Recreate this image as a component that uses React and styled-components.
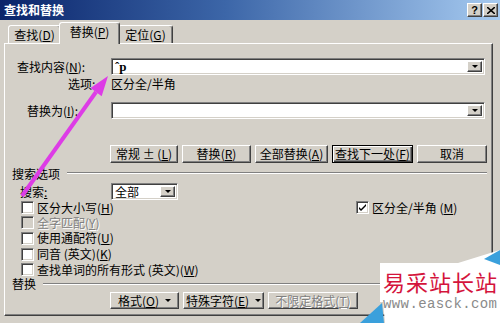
import React from "react";
import styled, { createGlobalStyle, css } from "styled-components";

const FONT = `"Noto Sans CJK SC", "Liberation Sans", sans-serif`;

const GlobalStyle = createGlobalStyle`
  * { box-sizing: border-box; }
  html, body { margin: 0; padding: 0; background: #d4d0c8; overflow: hidden; }
  body { font-family: ${FONT}; font-size: 12px; color: #000; }
`;

const raised = css`
  border: 1px solid;
  border-color: #fff #404040 #404040 #fff;
  box-shadow: inset -1px -1px #808080;
`;

const sunken = css`
  border: 1px solid;
  border-color: #808080 #fff #fff #808080;
  box-shadow: inset 1px 1px #404040, inset -1px -1px #d4d0c8;
`;

const Dialog = styled.div`
  position: relative;
  width: 500px;
  height: 323px;
  background: #d4d0c8;
  display: flex;
  flex-direction: column;
  overflow: hidden;
`;

const TitleBar = styled.div`
  height: 20px;
  display: flex;
  align-items: center;
  justify-content: space-between;
  padding: 0 2px 0 4px;
  background: linear-gradient(90deg, #0a246a 0%, #3c66a8 45%, #a6caf0 100%);
`;

const TitleText = styled.span`
  color: #fff;
  font-weight: bold;
  font-size: 12px;
  line-height: 1;
`;

const TitleButtons = styled.div`
  display: flex;
  gap: 1px;
`;

const TitleButton = styled.div`
  ${raised}
  width: 15px;
  height: 14px;
  background: #d4d0c8;
  display: flex;
  align-items: center;
  justify-content: center;
  font: bold 11px "Liberation Sans", sans-serif;
  line-height: 1;
`;

const TabStrip = styled.div`
  height: 23px;
  display: flex;
  align-items: flex-end;
  padding-left: 8px;
`;

const Tab = styled.div`
  position: relative;
  width: ${p => p.$w}px;
  height: ${p => (p.$active ? 22 : 18)}px;
  margin: 0 ${p => (p.$active ? -2 : 0)}px ${p => (p.$active ? -1 : 0)}px;
  z-index: ${p => (p.$active ? 2 : 1)};
  background: #d4d0c8;
  border: 1px solid;
  border-bottom: none;
  border-color: #fff #404040 transparent #fff;
  border-radius: 3px 3px 0 0;
  box-shadow: inset -1px 0 #808080;
  display: flex;
  align-items: center;
  justify-content: center;
  padding-bottom: ${p => (p.$active ? 3 : 0)}px;
  line-height: 1;
`;

const Panel = styled.div`
  height: 273px;
  margin: 0 7px 0 4px;
  ${raised}
  display: flex;
  flex-direction: column;
  padding-top: 13px;
`;

const FieldRow = styled.div`
  display: grid;
  grid-template-columns: 106px 374px;
  align-items: center;
  height: ${p => p.$h}px;
  margin-top: ${p => p.$mt || 0}px;
`;

const Label = styled.span`
  padding-left: ${p => p.$pl}px;
  line-height: 1;
  white-space: nowrap;
`;

const Key = styled.span`
  text-decoration: underline;
`;

const Combo = styled.div`
  ${sunken}
  width: ${p => p.$w}px;
  height: ${p => p.$h || 17}px;
  background: #fff;
  display: flex;
  align-items: center;
  justify-content: space-between;
  padding: 2px 2px 2px 3px;
`;

const ComboText = styled.span`
  font-family: ${p => (p.$mono ? `"Liberation Serif", serif` : FONT)};
  font-size: ${p => (p.$mono ? 13 : 12)}px;
  font-weight: ${p => (p.$mono ? "bold" : "normal")};
  line-height: 1;
`;

const DropButton = styled.div`
  ${raised}
  width: 15px;
  height: 100%;
  background: #d4d0c8;
  display: flex;
  align-items: center;
  justify-content: center;
`;

const Caret = styled.span`
  width: 0;
  height: 0;
  border-left: 3px solid transparent;
  border-right: 3px solid transparent;
  border-top: 3px solid #000;
`;

const ButtonRow = styled.div`
  display: flex;
  gap: 4px;
  padding-left: 105px;
  height: ${p => p.$h}px;
  margin-top: ${p => p.$mt || 0}px;
`;

const Button = styled.div`
  width: ${p => p.$w}px;
  height: 100%;
  background: #d4d0c8;
  display: flex;
  align-items: center;
  justify-content: center;
  gap: 6px;
  line-height: 1;
  white-space: nowrap;
  color: ${p => (p.$disabled ? "#808080" : "#000")};
  text-shadow: ${p => (p.$disabled ? "1px 1px #fff" : "none")};
  ${p =>
    p.$default
      ? css`
          border: 1px solid #000;
          box-shadow: inset 1px 1px #fff, inset -1px -1px #404040, inset -2px -2px #808080;
        `
      : raised}
`;

const GroupHeader = styled.div`
  display: flex;
  align-items: center;
  height: ${p => p.$h}px;
  margin-top: ${p => p.$mt || 0}px;
  padding: 0 5px 0 7px;
`;

const GroupLine = styled.div`
  flex: 1;
  margin-left: ${p => p.$gap}px;
  height: 2px;
  border-top: 1px solid #808080;
  border-bottom: 1px solid #fff;
`;

const CheckRow = styled.div`
  display: grid;
  grid-template-columns: 335px 1fr;
  align-items: center;
  height: ${p => p.$h}px;
  padding-left: 16px;
`;

const CheckItem = styled.div`
  display: flex;
  align-items: center;
  gap: 3px;
  line-height: 1;
  white-space: nowrap;
  color: ${p => (p.$disabled ? "#808080" : "#000")};
  text-shadow: ${p => (p.$disabled ? "1px 1px #fff" : "none")};
`;

const Box = styled.div`
  ${sunken}
  width: 13px;
  height: 13px;
  flex: none;
  background: ${p => (p.$disabled ? "#d4d0c8" : "#fff")};
  display: flex;
  align-items: center;
  justify-content: center;
`;

const Overlay = styled.svg`
  position: absolute;
  left: 0;
  top: 0;
  pointer-events: none;
`;

const Watermark = styled.div`
  position: absolute;
  right: 0;
  bottom: 0;
  width: 150px;
  height: 75px;
`;

const WatermarkShape = styled.svg`
  position: absolute;
  inset: 0;
`;

const WatermarkBody = styled.div`
  position: relative;
  padding: 22px 0 0 33px;
  display: flex;
  flex-direction: column;
  gap: 5px;
`;

const SiteName = styled.span`
  font-family: "Noto Sans CJK SC", serif;
  font-size: 22px;
  letter-spacing: 1px;
  line-height: 22px;
  color: #d4143c;
`;

const SiteUrl = styled.span`
  font-family: "Liberation Mono", monospace;
  font-size: 14px;
  letter-spacing: 0.4px;
  line-height: 14px;
  color: #8a8a8a;
`;

function Check({ children, checked, disabled }) {
  return (
    <CheckItem $disabled={disabled}>
      <Box $disabled={disabled}>
        {checked && (
          <svg width="7" height="7" viewBox="0 0 7 7">
            <path d="M0 3 L2 5 L7 0 L7 2 L2 7 L0 5 Z" fill="#000" />
          </svg>
        )}
      </Box>
      <span>{children}</span>
    </CheckItem>
  );
}

function K({ k }) {
  return (
    <>
      (<Key>{k}</Key>)
    </>
  );
}

function Btn({ children, caret, ...rest }) {
  return (
    <Button {...rest}>
      <span>{children}</span>
      {caret && <Caret />}
    </Button>
  );
}

export default function App() {
  return (
    <>
      <GlobalStyle />
      <Dialog>
        <TitleBar>
          <TitleText>查找和替换</TitleText>
          <TitleButtons>
            <TitleButton>?</TitleButton>
            <TitleButton>
              <svg width="8" height="7" viewBox="0 0 8 7">
                <path d="M0 0 L8 7 M8 0 L0 7" stroke="#000" strokeWidth="1.6" />
              </svg>
            </TitleButton>
          </TitleButtons>
        </TitleBar>

        <TabStrip>
          <Tab $w={53}><span>查找<K k="D" /></span></Tab>
          <Tab $w={61} $active><span>替换<K k="P" /></span></Tab>
          <Tab $w={55}><span>定位<K k="G" /></span></Tab>
        </TabStrip>

        <Panel>
          <FieldRow $h={17} $mt={1}>
            <Label $pl={12}>查找内容<K k="N" />:</Label>
            <Combo $w={374}>
              <ComboText $mono>ˆp</ComboText>
              <DropButton><Caret /></DropButton>
            </Combo>
          </FieldRow>
          <FieldRow $h={13}>
            <Label $pl={63}>选项:</Label>
            <span>区分全/半角</span>
          </FieldRow>
          <FieldRow $h={17} $mt={14}>
            <Label $pl={22}>替换为<K k="I" />:</Label>
            <Combo $w={374}>
              <span />
              <DropButton><Caret /></DropButton>
            </Combo>
          </FieldRow>

          <ButtonRow $h={18} $mt={26}>
            <Btn $w={68}>常规 ± <K k="L" /></Btn>
            <Btn $w={69}>替换<K k="R" /></Btn>
            <Btn $w={73}>全部替换<K k="A" /></Btn>
            <Btn $w={81} $default>查找下一处<K k="F" /></Btn>
            <Btn $w={70}>取消</Btn>
          </ButtonRow>

          <GroupHeader $h={14} $mt={3}>
            <span>搜索选项</span>
            <GroupLine $gap={7} />
          </GroupHeader>

          <FieldRow $h={17} $mt={3}>
            <Label $pl={15}>搜索<Key>:</Key></Label>
            <Combo $w={67} $h={17}>
              <span>全部</span>
              <DropButton><Caret /></DropButton>
            </Combo>
          </FieldRow>

          <CheckRow $h={15}>
            <Check>区分大小写<K k="H" /></Check>
            <Check checked>区分全/半角 <K k="M" /></Check>
          </CheckRow>
          <CheckRow $h={15}>
            <Check disabled>全字匹配<K k="Y" /></Check>
          </CheckRow>
          <CheckRow $h={16}>
            <Check>使用通配符<K k="U" /></Check>
          </CheckRow>
          <CheckRow $h={16}>
            <Check>同音 (英文)<K k="K" /></Check>
          </CheckRow>
          <CheckRow $h={15}>
            <Check>查找单词的所有形式 (英文)<K k="W" /></Check>
          </CheckRow>

          <GroupHeader $h={13}>
            <span>替换</span>
            <GroupLine $gap={7} />
          </GroupHeader>

          <ButtonRow $h={17} $mt={2}>
            <Btn $w={69} caret>格式<K k="O" /></Btn>
            <Btn $w={81} caret>特殊字符<K k="E" /></Btn>
            <Btn $w={90} $disabled>不限定格式<K k="T" /></Btn>
          </ButtonRow>
        </Panel>

        <Overlay width="500" height="323" viewBox="0 0 500 323">
          <line x1="22" y1="196" x2="96" y2="92" stroke="#dd3ce6" strokeWidth="4" />
          <polygon points="108,76 90.5,88 101.7,96.3" fill="#dd3ce6" />
        </Overlay>

        <Watermark>
          <WatermarkShape width="150" height="75" viewBox="0 0 150 75">
            <polygon points="30,15 108,15 150,2 150,75 35,75 33,54 30,54" fill="#fff" />
            <polygon points="134,11 150,2 150,17" fill="#3aa0dc" />
            <polygon points="10,75 32,55 34,75" fill="#3aa0dc" />
          </WatermarkShape>
          <WatermarkBody>
            <SiteName>易采站长站</SiteName>
            <SiteUrl>www.easck.com</SiteUrl>
          </WatermarkBody>
        </Watermark>
      </Dialog>
    </>
  );
}
